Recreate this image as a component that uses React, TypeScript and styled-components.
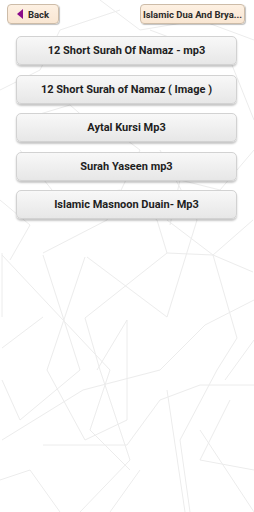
import styled, { createGlobalStyle } from "styled-components";

const GlobalStyle = createGlobalStyle`
  body {
    margin: 0;
    background: #ffffff;
    font-family: Roboto, "Liberation Sans", sans-serif;
  }
`;

const Screen = styled.div`
  position: relative;
  width: 254px;
  height: 512px;
  overflow: hidden;
  background: #ffffff;
`;

const Pattern = styled.svg`
  position: absolute;
  inset: 0;
  z-index: 0;
`;

const Content = styled.div`
  position: relative;
  z-index: 1;
  display: flex;
  flex-direction: column;
`;

const TopBar = styled.header`
  display: flex;
  justify-content: space-between;
  align-items: center;
  padding: 4px 9px 0 7px;
`;

const TopButton = styled.button<{ $width: number }>`
  display: flex;
  align-items: center;
  justify-content: center;
  gap: 5px;
  width: ${(p) => p.$width}px;
  height: 20px;
  padding: 0 4px;
  background: linear-gradient(#fdf0e2, #f9e6d2);
  border: 1px solid #cdbca8;
  border-radius: 4px;
  box-shadow: 1px 1px 1px rgba(0, 0, 0, 0.25);
  font-family: Roboto, "Liberation Sans", sans-serif;
  font-weight: 700;
  font-size: 9.5px;
  color: #2a2a2a;
  white-space: nowrap;
`;

const Arrow = styled.span`
  width: 0;
  height: 0;
  border-top: 5px solid transparent;
  border-bottom: 5px solid transparent;
  border-right: 6px solid #8a0a8a;
`;

const Menu = styled.nav`
  display: flex;
  flex-direction: column;
  gap: 9.5px;
  padding: 12px 17px 0 16px;
`;

const MenuButton = styled.button`
  height: 29px;
  background: linear-gradient(#f8f8f8, #e7e7e7);
  border: 1px solid #d2d2d2;
  border-radius: 5px;
  box-shadow: 0 2px 2px rgba(0, 0, 0, 0.22);
  font-family: Roboto, "Liberation Sans", sans-serif;
  font-weight: 700;
  font-size: 11px;
  color: #1e1e1e;
`;

const lines: string[] = [
  "2,255 110,370 90,430 130,470",
  "43,253 107,220 140,150 100,120",
  "43,255 80,370 20,420 2,380",
  "87,257 167,317 197,220 160,150",
  "85,257 47,370 85,440 127,420 127,320 97,370",
  "167,253 157,220 120,190 60,200 20,150",
  "85,318 167,253 213,255 253,220",
  "85,318 100,370 130,460 80,512",
  "213,255 253,272",
  "213,255 237,338 217,370 180,440 190,512",
  "167,220 213,255",
  "2,348 43,317",
  "2,253 2,317",
  "2,440 83,390 160,370 205,325 254,300",
  "43,445 127,445 160,400 200,385 254,385",
  "167,390 185,512",
  "200,430 254,512",
  "230,400 200,460 254,470",
  "150,30 230,60 254,120",
  "0,90 40,70 60,30 120,10",
  "20,120 70,105 110,140 160,130",
  "254,150 220,190 180,180 170,225",
  "0,200 30,225 10,260",
  "100,0 140,30 200,20 254,40",
  "60,512 30,470 0,480",
  "254,340 225,380",
  "140,470 110,512",
];

function BackgroundPattern() {
  return (
    <Pattern width="254" height="512" viewBox="0 0 254 512">
      {lines.map((pts, i) => (
        <polyline key={i} points={pts} fill="none" stroke="#ececec" strokeWidth="1" />
      ))}
    </Pattern>
  );
}

const items = [
  "12 Short Surah Of Namaz - mp3",
  "12 Short Surah of Namaz ( Image )",
  "Aytal Kursi Mp3",
  "Surah Yaseen mp3",
  "Islamic Masnoon Duain- Mp3",
];

export default function App() {
  return (
    <Screen>
      <GlobalStyle />
      <BackgroundPattern />
      <Content>
        <TopBar>
          <TopButton $width={52}>
            <Arrow />
            Back
          </TopButton>
          <TopButton $width={105}>Islamic Dua And Brya...</TopButton>
        </TopBar>
        <Menu>
          {items.map((label) => (
            <MenuButton key={label}>{label}</MenuButton>
          ))}
        </Menu>
      </Content>
    </Screen>
  );
}
